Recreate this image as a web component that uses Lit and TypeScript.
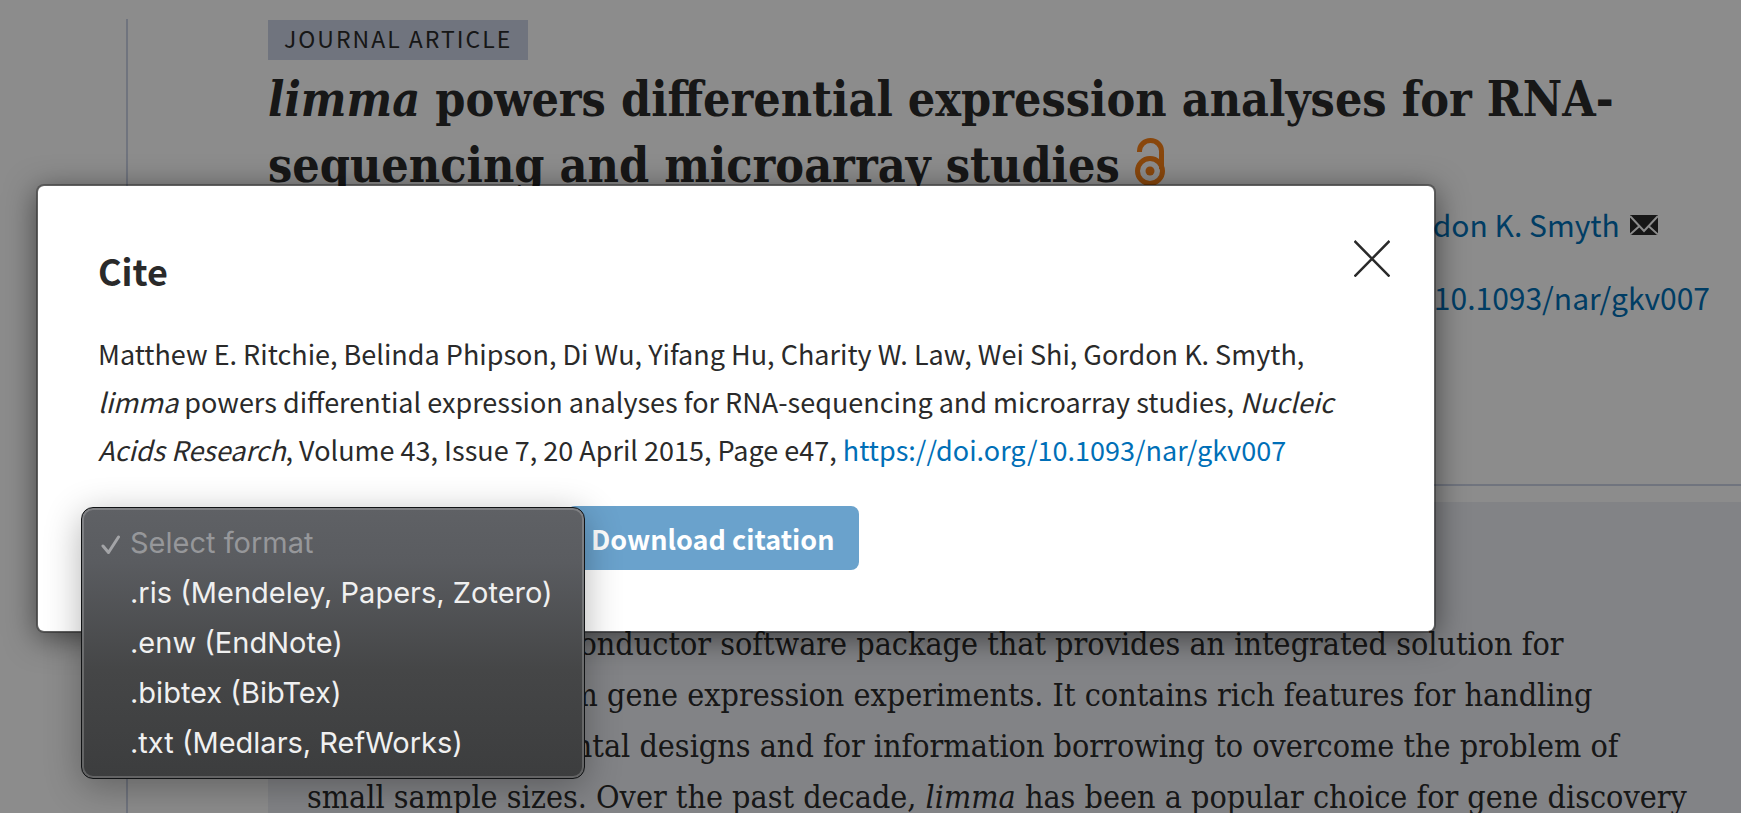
import { LitElement, html, css, svg } from "lit";
import { customElement, state } from "lit/decorators.js";

const FORMATS = [
  { value: "ris", label: ".ris (Mendeley, Papers, Zotero)" },
  { value: "enw", label: ".enw (EndNote)" },
  { value: "bibtex", label: ".bibtex (BibTex)" },
  { value: "txt", label: ".txt (Medlars, RefWorks)" },
];

const AUTHORS = [
  "Matthew E. Ritchie",
  "Belinda Phipson",
  "Di Wu",
  "Yifang Hu",
  "Charity W. Law",
  "Wei Shi",
  "Gordon K. Smyth",
];

const DOI = "https://doi.org/10.1093/nar/gkv007";

const openAccessMark = svg`
  <circle cx="15" cy="33" r="12.5" fill="none" stroke="currentColor" stroke-width="5"/>
  <circle cx="15" cy="33" r="4.5" fill="currentColor"/>
  <path d="M4.500 14V13A11 10.500 0 0 1 26.500 13V31" fill="none" stroke="currentColor" stroke-width="5"/>`;

@customElement("article-page")
class ArticlePage extends LitElement {
  static styles = css`
    :host {
      display: block;
      padding: 19px 0 0 126px;
      color: #2a2a2a;
      font-family: "Noto Sans CJK SC", "Open Sans", sans-serif;
    }
    .column {
      border-left: 2px solid #ccd3e5;
      padding: 1px 0 0 140px;
      min-height: 100vh;
    }
    .tag {
      display: block;
      width: fit-content;
      padding: 0 16px 4px;
      background: #ccd3e5;
      font-size: 23px;
      line-height: 36px;
      letter-spacing: 2px;
    }
    .title {
      margin: 6px 0 0;
      font-family: "DejaVu Serif Condensed", "DejaVu Serif", serif;
      font-stretch: condensed;
      font-size: 48px;
      line-height: 66px;
      font-weight: 700;
      white-space: nowrap;
    }
    .access {
      width: 32px;
      height: 47px;
      color: #f98116;
      vertical-align: -3px;
    }
    .meta {
      display: flex;
      align-items: center;
      font-size: 30px;
      line-height: 40px;
      white-space: nowrap;
    }
    .authors {
      gap: 10px;
      margin: 6px 0 33px;
    }
    .source {
      gap: 18px;
      margin: 0;
    }
    a {
      color: #006fb7;
      text-decoration: none;
    }
    .mail {
      width: 28px;
      height: 21px;
    }
    .rule {
      height: 2px;
      margin: 167px 0 16px;
      border: 0;
      background: #ccd3e5;
    }
    .abstract {
      min-height: 400px;
      padding: 26px 39px;
      background: #edeef4;
      font-family: "DejaVu Serif Condensed", "DejaVu Serif", serif;
      font-stretch: condensed;
    }
    .heading {
      margin: 0 0 43px;
      font-size: 30px;
      line-height: 48px;
    }
    .text {
      margin: 0;
      font-size: 32px;
      line-height: 51px;
      white-space: nowrap;
    }
  `;

  render() {
    return html`
      <article class="column">
        <span class="tag">JOURNAL ARTICLE</span>
        <h1 class="title">
          <em>limma</em> powers differential expression analyses for RNA-<br />
          sequencing and microarray studies
          <svg class="access" viewBox="0 0 32 47" role="img" aria-label="Open access">${openAccessMark}</svg>
        </h1>
        <p class="meta authors">
          ${AUTHORS.map((name, i) => html`<span><a href="#">${name}</a>${i < AUTHORS.length - 1 ? "," : ""}</span>`)}
          <svg class="mail" viewBox="0 0 28 21" role="img" aria-label="Email the author">
            <path d="M0 1H28V21H0Z" fill="#2a2a2a" />
            <path d="M0 2L14 17L28 2M0 20.500L9.500 12M28 20.500L18.500 12" fill="none" stroke="#fff" stroke-width="2" />
          </svg>
        </p>
        <p class="meta source">
          <span><em>Nucleic Acids Research</em>, Volume 43, Issue 7, 20 April 2015, Page e47,</span>
          <a href=${DOI}>${DOI}</a>
        </p>
        <hr class="rule" />
        <section class="abstract">
          <h2 class="heading">Abstract</h2>
          <p class="text">
            <em>limma</em> is an R/Bioconductor software package that provides an integrated solution for<br />
            analysing data from gene expression experiments. It contains rich features for handling<br />
            complex experimental designs and for information borrowing to overcome the problem of<br />
            small sample sizes. Over the past decade, <em>limma</em> has been a popular choice for gene discovery
          </p>
        </section>
      </article>
    `;
  }
}

@customElement("cite-dialog")
class CiteDialog extends LitElement {
  @state() private format = "";

  static styles = css`
    :host {
      display: block;
      box-sizing: border-box;
      width: 100%;
      max-width: 1400px;
      color: #2a2a2a;
      font-family: "Noto Sans CJK SC", "Open Sans", sans-serif;
    }
    .panel {
      padding: 48px 60px 61px;
      border: 2px solid rgba(0, 0, 0, 0.3);
      border-radius: 8px;
      background: #fff;
      background-clip: padding-box;
      box-shadow: 0 6px 30px rgba(0, 0, 0, 0.5);
    }
    .head {
      display: flex;
      justify-content: space-between;
      align-items: flex-start;
    }
    .name {
      margin: 9px 0 0;
      font-size: 36px;
      line-height: 54px;
      font-weight: 700;
    }
    .close {
      display: flex;
      padding: 6px;
      margin-right: -22px;
      border: 0;
      background: none;
      color: inherit;
    }
    .cross {
      width: 36px;
      height: 37px;
    }
    .citation {
      margin: 33px 0 32px;
      font-size: 27px;
      line-height: 48px;
      white-space: nowrap;
    }
    .link {
      color: #006fb7;
      text-decoration: none;
    }
    .actions {
      display: flex;
    }
    .picker {
      position: relative;
      width: 469px;
      height: 64px;
    }
    .menu {
      position: absolute;
      top: 1px;
      left: -17px;
      box-sizing: border-box;
      width: 504px;
      padding: 10px 0;
      border: 1px solid #111315;
      border-radius: 12px;
      background: linear-gradient(#5f6165, #5a5c60 20%, #454647 60%, #3c3d3e);
      box-shadow: inset 0 0 0 2px rgba(255, 255, 255, 0.2), 0 8px 36px rgba(0, 0, 0, 0.3);
    }
    .list {
      display: block;
      width: 100%;
      padding: 0;
      border: 0;
      outline: none;
      overflow: hidden;
      appearance: none;
      background: none;
      color: #f0f0f0;
      font: 29px / 50px Inter, Roboto, sans-serif;
    }
    .item,
    .item:checked {
      box-sizing: border-box;
      min-height: 50px;
      padding: 7px 0 7px 48px;
      background: none;
      color: #f0f0f0;
      font-size: 29px;
    }
    .item:disabled {
      color: #96979a;
    }
    .tick {
      position: absolute;
      top: 27px;
      left: 19px;
      width: 20px;
      height: 20px;
      pointer-events: none;
    }
    .download {
      padding: 2px 24px 0;
      border: 0;
      border-radius: 8px;
      background: #6aa2cc;
      color: #fff;
      font: 700 27px / 62px "Noto Sans CJK SC", "Open Sans", sans-serif;
    }
  `;

  private pick(e: Event) {
    this.format = (e.target as HTMLSelectElement).value;
  }

  render() {
    return html`
      <div class="panel" role="dialog" aria-labelledby="name">
        <header class="head">
          <h2 class="name" id="name">Cite</h2>
          <button class="close" aria-label="Close">
            <svg class="cross" viewBox="0 0 36 37">
              <path d="M0.500 1L35.500 36.500M35.500 1L0.500 36.500" fill="none" stroke="currentColor" stroke-width="2.500" />
            </svg>
          </button>
        </header>
        <p class="citation">
          ${AUTHORS.join(", ")},<br />
          <em>limma</em> powers differential expression analyses for RNA-sequencing and microarray studies,
          <em>Nucleic</em><br />
          <em>Acids Research</em>, Volume 43, Issue 7, 20 April 2015, Page e47,
          <a class="link" href=${DOI}>${DOI}</a>
        </p>
        <div class="actions">
          <div class="picker">
            <div class="menu">
              <select class="list" size="5" aria-label="Citation format" @change=${this.pick}>
                <option class="item" value="" disabled selected>Select format</option>
                ${FORMATS.map((f) => html`<option class="item" value=${f.value}>${f.label}</option>`)}
              </select>
              <svg class="tick" viewBox="0 0 20 20" aria-hidden="true">
                <path d="M2 11L7.500 17.500L17.500 2" fill="none" stroke="#a3a4a7" stroke-width="3" stroke-linecap="round" stroke-linejoin="round" />
              </svg>
            </div>
          </div>
          <button class="download">Download citation</button>
        </div>
      </div>
    `;
  }
}

@customElement("app-root")
class AppRoot extends LitElement {
  static styles = css`
    :host {
      display: block;
      position: relative;
      height: 100vh;
      overflow: hidden;
      background: #fff;
    }
    .overlay {
      position: absolute;
      inset: 0;
      box-sizing: border-box;
      padding: 184px 36px 0;
      background: rgba(0, 0, 0, 0.45);
    }
  `;

  render() {
    return html`
      <article-page></article-page>
      <div class="overlay"><cite-dialog></cite-dialog></div>
    `;
  }
}
